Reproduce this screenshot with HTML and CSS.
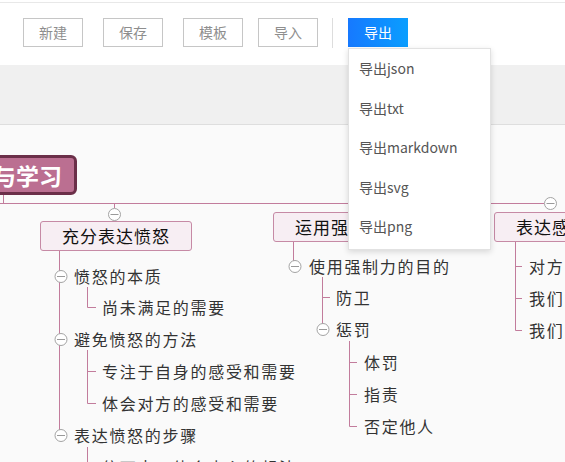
FILE: index.html
```html
<!DOCTYPE html>
<html lang="zh-CN">
<head>
<meta charset="utf-8">
<title>思维导图</title>
<link rel="stylesheet" href="styles.css">
</head>
<body>
<div class="topline"></div>
<header class="toolbar">
  <button class="btn">新建</button>
  <button class="btn">保存</button>
  <button class="btn">模板</button>
  <button class="btn btn-import">导入</button>
  <span class="sep"></span>
  <div class="export">
    <button class="btn-primary">导出</button>
    <ul class="menu">
      <li>导出json</li>
      <li>导出txt</li>
      <li>导出markdown</li>
      <li>导出svg</li>
      <li>导出png</li>
    </ul>
  </div>
</header>
<div class="subbar"></div>
<main class="canvas">
  <svg class="links" width="565" height="337" viewBox="0 0 565 337">
    <g fill="none" stroke="#c27c9c" stroke-width="1">
      <path d="M3.5 70 V78.5"/>
      <path d="M0 78.5 H544"/>
      <path d="M114.5 78.5 V83"/>
      <path d="M59.5 126 V310"/>
      <path d="M87.5 162 V182.5 H96"/>
      <path d="M87.5 225 V278.5 H96 M87.5 246.5 H96"/>
      <path d="M87.5 322 V342.5 H96"/>
      <path d="M293.5 117 V141"/>
      <path d="M322.5 152 V204 M322.5 172.5 H330"/>
      <path d="M349.5 216 V301.5 H357 M349.5 237.5 H357 M349.5 269.5 H357"/>
      <path d="M515.5 117 V205.5 H522 M515.5 141.5 H522 M515.5 173.5 H522"/>
    </g>
    <g class="toggle">
      <circle cx="114.5" cy="89.5" r="6"/><path d="M110.5 89.5 H118.5"/>
      <circle cx="375.5" cy="78.5" r="6"/><path d="M371.5 78.5 H379.5"/>
      <circle cx="550.5" cy="78.5" r="6"/><path d="M546.5 78.5 H554.5"/>
      <circle cx="61" cy="151.5" r="6"/><path d="M57 151.5 H65"/>
      <circle cx="61" cy="214.5" r="6"/><path d="M57 214.5 H65"/>
      <circle cx="61" cy="310.5" r="6"/><path d="M57 310.5 H65"/>
      <circle cx="295" cy="141.5" r="6"/><path d="M291 141.5 H299"/>
      <circle cx="323" cy="204.5" r="6"/><path d="M319 204.5 H327"/>
    </g>
  </svg>

  <div class="root">愤怒与学习</div>

  <div class="topic" style="left:40px;top:96px">充分表达愤怒</div>
  <div class="topic" style="left:273px;top:87px">运用强制力</div>
  <div class="topic" style="left:494px;top:87px">表达感激</div>

  <div class="leaf" style="left:74px;top:141px">愤怒的本质</div>
  <div class="leaf" style="left:102px;top:172px">尚未满足的需要</div>
  <div class="leaf" style="left:74px;top:204px">避免愤怒的方法</div>
  <div class="leaf" style="left:102px;top:236px">专注于自身的感受和需要</div>
  <div class="leaf" style="left:102px;top:268px">体会对方的感受和需要</div>
  <div class="leaf" style="left:74px;top:300px">表达愤怒的步骤</div>
  <div class="leaf" style="left:102px;top:332px">停下来，体会内心的想法</div>

  <div class="leaf" style="left:309px;top:131px">使用强制力的目的</div>
  <div class="leaf" style="left:336px;top:162px">防卫</div>
  <div class="leaf" style="left:336px;top:194px">惩罚</div>
  <div class="leaf" style="left:364px;top:227px">体罚</div>
  <div class="leaf" style="left:364px;top:259px">指责</div>
  <div class="leaf" style="left:364px;top:291px">否定他人</div>

  <div class="leaf" style="left:529px;top:131px">对方的行为</div>
  <div class="leaf" style="left:529px;top:163px">我们的需要</div>
  <div class="leaf" style="left:529px;top:195px">我们的感受</div>
</main>
</body>
</html>
```
FILE: styles.css
```css
* { box-sizing: border-box; }

html, body {
  margin: 0;
  padding: 0;
}

body {
  width: 565px;
  height: 462px;
  overflow: hidden;
  background: #fafafa;
  font-family: "Noto Sans CJK SC", "Noto Sans", sans-serif;
  position: relative;
}

.topline {
  height: 2px;
  background: #fff;
}

.toolbar {
  height: 63px;
  border-top: 1px solid #e8e8e8;
  background: #fff;
  display: flex;
  align-items: flex-start;
  padding: 15px 0 0 23px;
  position: relative;
  z-index: 5;
}

.btn {
  width: 60px;
  height: 29px;
  border: 1px solid #c6c6c6;
  background: #fff;
  color: #8e8e8e;
  font-family: inherit;
  font-size: 14px;
  padding: 0;
  line-height: 27px;
  margin-right: 20px;
}

.btn-import {
  margin-left: -5px;
  margin-right: 14px;
}

.sep {
  width: 1px;
  height: 30px;
  background: #dddddd;
  margin-right: 15px;
}

.export {
  position: relative;
}

.btn-primary {
  width: 60px;
  height: 29px;
  border: 0;
  padding: 0;
  background: linear-gradient(90deg, #1679ff, #0a9eff);
  color: #fff;
  font-family: inherit;
  font-size: 14px;
  line-height: 29px;
}

.menu {
  position: absolute;
  top: 30px;
  left: 0;
  width: 143px;
  height: 202px;
  margin: 0;
  padding: 0;
  list-style: none;
  background: #fff;
  border: 1px solid #e2e2e2;
  box-shadow: 0 2px 6px rgba(0, 0, 0, 0.14);
}

.menu li {
  height: 39.6px;
  line-height: 39.6px;
  padding-left: 10px;
  font-size: 14px;
  color: #555;
}

.subbar {
  height: 60px;
  background: #f0f0f0;
  border-bottom: 1px solid #dedede;
}

.canvas {
  position: relative;
  height: 337px;
  overflow: hidden;
  background: #fafafa;
}

.links {
  position: absolute;
  left: 0;
  top: 0;
}

.toggle circle {
  fill: #fff;
  stroke: #a3a3a3;
  stroke-width: 1;
}

.toggle path {
  stroke: #9a9a9a;
  stroke-width: 1;
}

.root {
  position: absolute;
  left: -100px;
  top: 30px;
  width: 177px;
  height: 40px;
  padding-right: 12px;
  text-align: right;
  background: #bb6f91;
  border: 3px solid #6b2f49;
  border-radius: 6px;
  color: #fff;
  font-size: 23px;
  font-weight: bold;
  line-height: 34px;
  white-space: nowrap;
}

.topic {
  position: absolute;
  height: 30px;
  padding: 0 21px;
  background: #f7eef3;
  border: 1px solid #c68aa5;
  border-radius: 3px;
  color: #111;
  font-size: 17px;
  letter-spacing: 1px;
  line-height: 28px;
  white-space: nowrap;
}

.leaf {
  position: absolute;
  height: 20px;
  line-height: 20px;
  font-size: 16px;
  letter-spacing: 1.7px;
  color: #333;
  white-space: nowrap;
}
```
